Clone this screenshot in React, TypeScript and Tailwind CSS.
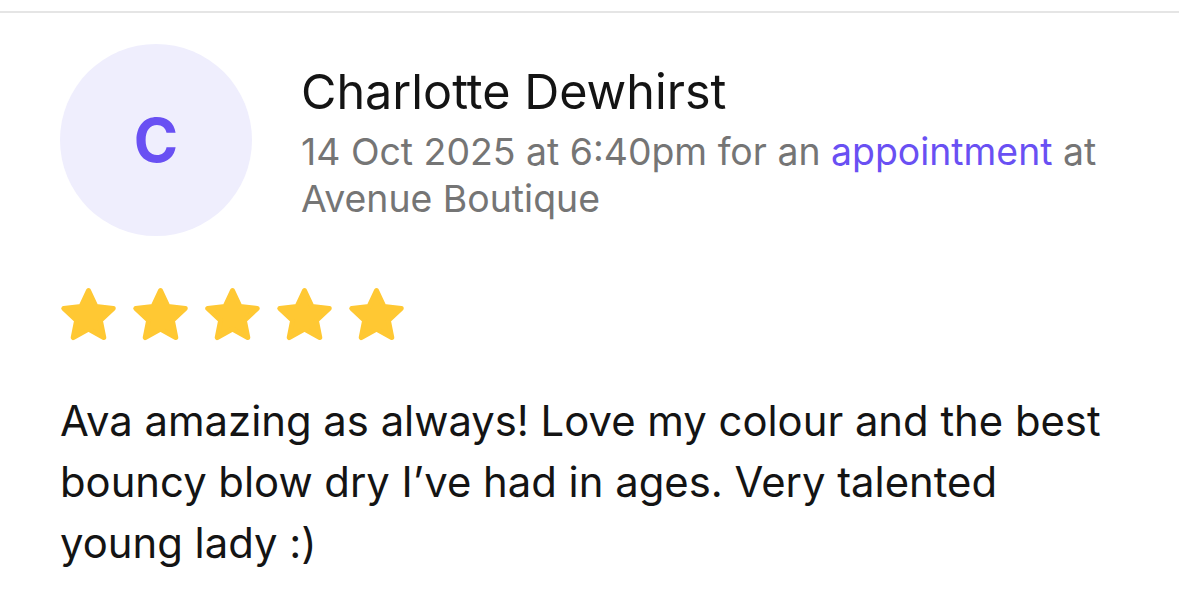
export default function App() {
  const star = (
    <svg width="57" height="54" viewBox="0 0 57 54" className="shrink-0">
      <polygon
        points="28.5,3.5 35.85,19.39 53.23,21.47 40.39,33.36 43.78,50.53 28.5,42 13.22,50.53 16.61,33.36 3.77,21.47 21.15,19.39"
        fill="#ffc833"
        stroke="#ffc833"
        strokeWidth="5"
        strokeLinejoin="round"
      />
    </svg>
  );
  return (
    <div className="w-[1179px] h-[610px] bg-white overflow-hidden" style={{ fontFamily: "Inter, 'Noto Sans', sans-serif" }}>
      <div className="h-[11px]" />
      <div className="h-[2px] bg-[#e5e5e5]" />
      <div className="pl-[60px] pr-[40px] pt-[31px]">
        <div className="flex items-start">
          <div className="w-[192px] h-[192px] rounded-full bg-[#efeefd] flex items-center justify-center shrink-0">
            <span className="text-[60px] font-bold text-[#6950f3] leading-none">C</span>
          </div>
          <div className="ml-[49px] pt-[19px]">
            <div className="text-[48.5px] leading-[58px] text-[#141414]">Charlotte Dewhirst</div>
            <div className="text-[37.4px] leading-[47px] text-[#757575] mt-[7px]">
              14 Oct 2025 at 6:40pm for an <span className="text-[#6950f3]">appointment</span> at Avenue Boutique
            </div>
          </div>
        </div>
        <div className="flex gap-[15px] mt-[51px]">
          {star}{star}{star}{star}{star}
        </div>
        <div className="mt-[50px] text-[41.8px] leading-[61px] text-[#141414] max-w-[1055px]">
          Ava amazing as always! Love my colour and the best bouncy blow dry I’ve had in ages. Very talented young lady :)
        </div>
      </div>
    </div>
  );
}
